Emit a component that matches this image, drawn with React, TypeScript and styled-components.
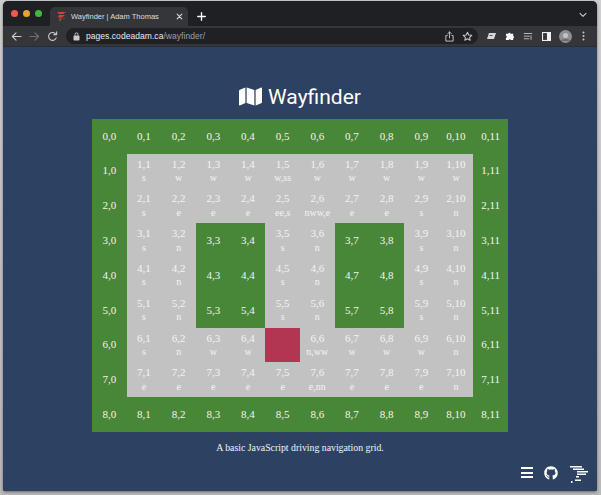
import React from 'react'
import styled, { createGlobalStyle } from 'styled-components'
import { FaMap, FaGithub } from 'react-icons/fa'

const GlobalStyle = createGlobalStyle`
  html, body { margin: 0; padding: 0; height: 100%; background: #d4d4d4; }
  #root { height: 100%; }
`

const Desktop = styled.div`
  width: 601px;
  height: 495px;
  box-sizing: border-box;
  padding: 1px 4px 4px 3px;
  background: linear-gradient(#cfcfcf, #b9b9b9);
  overflow: hidden;
`
const Win = styled.div`
  height: 100%;
  display: flex;
  flex-direction: column;
  border-radius: 5px 5px 2px 2px;
  overflow: hidden;
  background: #2d4263;
  box-shadow: 0 1px 3px rgba(0,0,0,.45);
`
const TabStrip = styled.div`
  height: 25px;
  flex: none;
  display: flex;
  align-items: flex-end;
  background: #1f2023;
  padding-left: 8px;
`
const Lights = styled.div`
  display: flex;
  gap: 5px;
  align-self: center;
  margin-right: 8px;
`
const Light = styled.span<{ $c: string }>`
  width: 7px;
  height: 7px;
  border-radius: 50%;
  background: ${p => p.$c};
`
const Tab = styled.div`
  width: 138px;
  height: 19px;
  background: #35363a;
  border-radius: 5px 5px 0 0;
  display: flex;
  align-items: center;
  padding: 0 5px 0 6px;
  box-sizing: border-box;
  color: #dcdde0;
  font: 7.5px "Liberation Sans", sans-serif;
`
const TabTitle = styled.span`
  flex: 1;
  margin-left: 4px;
  white-space: nowrap;
`
const NewTab = styled.div`
  width: 20px;
  height: 19px;
  display: flex;
  align-items: center;
  justify-content: center;
  margin-left: 3px;
`
const Chevron = styled.div`
  margin-left: auto;
  align-self: center;
  margin-right: 10px;
  margin-bottom: -3px;
  display: flex;
`
const Toolbar = styled.div`
  height: 21px;
  flex: none;
  background: #35363a;
  display: flex;
  align-items: center;
  padding: 0 0 0 8px;
  box-sizing: border-box;
  border-bottom: 1px solid #2b2c30;
`
const NavIcons = styled.div`
  display: flex;
  align-items: center;
  gap: 7px;
  margin-right: 8px;
`
const Omnibox = styled.div`
  flex: none;
  width: 412px;
  height: 16px;
  border-radius: 8px;
  background: #202124;
  display: flex;
  align-items: center;
  padding: 0 5px 0 7px;
  box-sizing: border-box;
  font: 8.5px "Liberation Sans", sans-serif;
  color: #e8eaed;
`
const Host = styled.span`
  margin-left: 6px;
  letter-spacing: .05px;
`
const Path = styled.span`
  color: #9aa0a6;
`
const OmniIcons = styled.div`
  margin-left: auto;
  display: flex;
  gap: 7px;
  align-items: center;
`
const ExtIcons = styled.div`
  margin-left: 4px;
  display: flex;
  align-items: center;
`
const ExtSlot = styled.div`
  width: 18.5px;
  display: flex;
  justify-content: center;
  align-items: center;
`
const Page = styled.main`
  flex: 1;
  min-height: 0;
  display: flex;
  flex-direction: column;
  align-items: center;
  padding-top: 36px;
  position: relative;
  background: #2d4263;
`
const Title = styled.h1`
  margin: 0 0 9px;
  display: flex;
  align-items: center;
  gap: 6px;
  height: 27px;
  color: #fff;
  font: 400 21px Roboto, "Liberation Sans", sans-serif;
  svg { width: 23px; height: 21px; }
`
const Grid = styled.div`
  width: 416px;
  height: 313px;
  display: grid;
  grid-template-columns: repeat(12, 1fr);
  grid-template-rows: repeat(9, 1fr);
  background: #c2c2c2;
`
const Cell = styled.div<{ $kind: 'wall' | 'road' | 'car' }>`
  display: flex;
  flex-direction: column;
  align-items: center;
  justify-content: center;
  color: ${p => (p.$kind === 'wall' ? '#f2f6ef' : '#f4f4f4')};
  background: ${p => (p.$kind === 'wall' ? '#478737' : p.$kind === 'car' ? '#b23652' : '#c2c2c2')};
  white-space: nowrap;
  font-family: "Liberation Serif", serif;
`
const Coord = styled.span`
  font-size: 11px;
  line-height: 13.5px;
`
const Dir = styled.span`
  font-size: 10px;
  line-height: 13.5px;
`
const Caption = styled.p`
  margin: 9px 0 0;
  color: #f2f4f7;
  font: 9.8px/14px "Liberation Serif", serif;
`
const Corner = styled.nav`
  position: absolute;
  right: 9px;
  bottom: 8px;
  display: flex;
  align-items: flex-start;
  color: #fff;
  svg { display: block; }
`
const Burger = styled.div`
  width: 12px;
  height: 11px;
  margin: 1px 11px 0 0;
  display: flex;
  flex-direction: column;
  justify-content: space-between;
  span { height: 2px; background: #fff; display: block; }
`
const GitMark = styled.div`
  margin-right: 12px;
`

const directions: Record<string, string> = {
  '1,1': 's', '1,2': 'w', '1,3': 'w', '1,4': 'w', '1,5': 'w,ss', '1,6': 'w', '1,7': 'w', '1,8': 'w', '1,9': 'w', '1,10': 'w',
  '2,1': 's', '2,2': 'e', '2,3': 'e', '2,4': 'e', '2,5': 'ee,s', '2,6': 'nww,e', '2,7': 'e', '2,8': 'e', '2,9': 's', '2,10': 'n',
  '3,1': 's', '3,2': 'n', '3,5': 's', '3,6': 'n', '3,9': 's', '3,10': 'n',
  '4,1': 's', '4,2': 'n', '4,5': 's', '4,6': 'n', '4,9': 's', '4,10': 'n',
  '5,1': 's', '5,2': 'n', '5,5': 's', '5,6': 'n', '5,9': 's', '5,10': 'n',
  '6,1': 's', '6,2': 'n', '6,3': 'w', '6,4': 'w', '6,6': 'n,ww', '6,7': 'w', '6,8': 'w', '6,9': 'w', '6,10': 'n',
  '7,1': 'e', '7,2': 'e', '7,3': 'e', '7,4': 'e', '7,5': 'e', '7,6': 'e,nn', '7,7': 'e', '7,8': 'e', '7,9': 'e', '7,10': 'n',
}

const cells: { key: string; kind: 'wall' | 'road' | 'car'; dir?: string }[] = []
for (let r = 0; r < 9; r++) {
  for (let c = 0; c < 12; c++) {
    const key = `${r},${c}`
    const dir = directions[key]
    const kind = key === '6,5' ? 'car' : dir ? 'road' : 'wall'
    cells.push({ key, kind, dir })
  }
}

const Stroke = ({ w = 11, h = 11, vb = '0 0 12 12', c = '#c8cace', children }: any) => (
  <svg width={w} height={h} viewBox={vb} fill="none" stroke={c} strokeWidth="1.2" strokeLinecap="round" strokeLinejoin="round">
    {children}
  </svg>
)

export default function App() {
  return (
    <Desktop>
      <GlobalStyle />
      <Win>
        <TabStrip>
          <Lights>
            <Light $c="#ee5a52" />
            <Light $c="#e5a52b" />
            <Light $c="#3fb93f" />
          </Lights>
          <Tab>
            <svg width="11" height="11" viewBox="0 0 11 11">
              <path d="M1 1h9L7 3H3zM3 4h6L6 6.500H2zM3 8l3-1-2 3.500z" fill="#d8412f" />
              <path d="M7 7l2-1-1 3z" fill="#8a3a2a" />
            </svg>
            <TabTitle>Wayfinder | Adam Thomas</TabTitle>
            <Stroke w={7} h={7} c="#dcdde0"><path d="M2 2l8 8M10 2l-8 8" strokeWidth="1.8" /></Stroke>
          </Tab>
          <NewTab>
            <Stroke w={9} h={9} c="#fff"><path d="M6 1v10M1 6h10" strokeWidth="1.8" /></Stroke>
          </NewTab>
          <Chevron>
            <Stroke w={8} h={6} vb="0 0 12 8" c="#c8cace"><path d="M1.500 1.500L6 6l4.500-4.500" strokeWidth="1.6" /></Stroke>
          </Chevron>
        </TabStrip>
        <Toolbar>
          <NavIcons>
            <Stroke c="#c8cace"><path d="M11 6H1.500M5.500 2L1.500 6l4 4" /></Stroke>
            <Stroke c="#6d6f73"><path d="M1 6h9.500M6.500 2l4 4-4 4" /></Stroke>
            <Stroke c="#c8cace"><path d="M10 7.500A4.300 4.300 0 1 1 9.600 3.500M10.500 1v3h-3" /></Stroke>
          </NavIcons>
          <Omnibox>
            <svg width="7" height="9" viewBox="0 0 7 9">
              <rect x="0.500" y="3.500" width="6" height="5" rx="1" fill="#c8cace" />
              <path d="M2 3.500V2.400a1.500 1.500 0 0 1 3 0v1.100" fill="none" stroke="#c8cace" />
            </svg>
            <Host>pages.codeadam.ca<Path>/wayfinder/</Path></Host>
            <OmniIcons>
              <Stroke c="#c8cace"><path d="M3.500 5H2v6h8V5H8.500M6 7.500V1M4 3l2-2 2 2" strokeWidth="1" /></Stroke>
              <Stroke c="#c8cace"><path d="M6 1.300l1.400 3 3.300.4-2.400 2.200.6 3.200L6 8.500l-2.900 1.600.6-3.200L1.300 4.700l3.300-.4z" strokeWidth="1.100" /></Stroke>
            </OmniIcons>
          </Omnibox>
          <ExtIcons>
            <ExtSlot><svg width="11" height="9" viewBox="0 0 11 9"><path d="M3 1h7L8 7H1z" fill="#d6d8dc" /><path d="M3.500 3.500h3" stroke="#55575b" /></svg></ExtSlot>
            <ExtSlot><svg width="10" height="10" viewBox="0 0 11 11"><path d="M1 3h2.500a1.300 1.300 0 0 1 2.500 0H9v2.500a1.300 1.300 0 0 1 0 2.500V10H6.500a1.300 1.300 0 0 0-2.500 0H1V7.500a1.300 1.300 0 0 0 0-2.500z" fill="#fff" /></svg></ExtSlot>
            <ExtSlot><Stroke w={10} h={9} c="#d0d2d6"><path d="M1 2h10M1 5.500h7M1 9h6M10 5v5" strokeWidth="1.100" /></Stroke></ExtSlot>
            <ExtSlot><svg width="9" height="9" viewBox="0 0 10 10"><rect x="0.600" y="0.600" width="8.800" height="8.800" fill="none" stroke="#f0f0f0" strokeWidth="1.200" /><rect x="5.500" y="1" width="3.500" height="8" fill="#f0f0f0" /></svg></ExtSlot>
            <ExtSlot><svg width="13" height="13" viewBox="0 0 13 13"><circle cx="6.500" cy="6.500" r="6.500" fill="#8f9092" /><circle cx="6.500" cy="5.500" r="2.500" fill="#c4c4c4" /><path d="M2 11c1-3 8-3 9 0z" fill="#6d6e70" /></svg></ExtSlot>
            <ExtSlot><svg width="3" height="10" viewBox="0 0 3 10" fill="#c8cace"><circle cx="1.500" cy="1.500" r="1" /><circle cx="1.500" cy="5" r="1" /><circle cx="1.500" cy="8.500" r="1" /></svg></ExtSlot>
          </ExtIcons>
        </Toolbar>
        <Page>
          <Title><FaMap />Wayfinder</Title>
          <Grid>
            {cells.map(cell => (
              <Cell key={cell.key} $kind={cell.kind}>
                {cell.kind !== 'car' && <Coord>{cell.key}</Coord>}
                {cell.dir && <Dir>{cell.dir}</Dir>}
              </Cell>
            ))}
          </Grid>
          <Caption>A basic JavaScript driving navigation grid.</Caption>
          <Corner>
            <Burger><span /><span /><span /></Burger>
            <GitMark><FaGithub size={14} /></GitMark>
            <svg width="18" height="17" viewBox="0 0 18 17" fill="#fff">
              <path d="M0 0h12v1.500H0zM3 2.500h11v1.500H3zM7 5h11v1.500H7zM7 7.500h9V9H7zM6 10h3v1.500H6zM5 13.500h6V15H5zM1 15h1.500v2H1z" />
            </svg>
          </Corner>
        </Page>
      </Win>
    </Desktop>
  )
}
